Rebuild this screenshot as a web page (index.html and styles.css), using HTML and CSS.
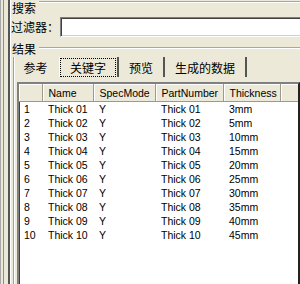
FILE: index.html
```html
<!DOCTYPE html>
<html lang="zh">
<head>
  <meta charset="UTF-8">
  <title>搜索</title>
  <link rel="stylesheet" href="styles.css">
</head>
<body>
  <div class="win">
    <div class="pane">
      <div class="grp grp-search">
        <div class="cap">搜索</div>
        <div class="filter">
          <label>过滤器：</label>
          <input type="text" />
        </div>
      </div>

      <div class="grp grp-result">
        <div class="cap">结果</div>
        <div class="tabctl">
          <div class="tabs">
            <span class="tab t1">参考</span>
            <span class="tab t2 sel"><span class="focus">关键字</span></span>
            <span class="tab t3">预览</span>
            <span class="tab t4">生成的数据</span>
          </div>
          <div class="page">
            <div class="list">
              <table>
                <colgroup>
                  <col class="c0"><col class="c1"><col class="c2"><col class="c3"><col class="c4"><col>
                </colgroup>
                <thead>
                  <tr><th></th><th>Name</th><th>SpecMode</th><th>PartNumber</th><th>Thickness</th><th></th></tr>
                </thead>
                <tbody>
                  <tr><td>1</td><td>Thick 01</td><td>Y</td><td>Thick 01</td><td>3mm</td><td></td></tr>
                  <tr><td>2</td><td>Thick 02</td><td>Y</td><td>Thick 02</td><td>5mm</td><td></td></tr>
                  <tr><td>3</td><td>Thick 03</td><td>Y</td><td>Thick 03</td><td>10mm</td><td></td></tr>
                  <tr><td>4</td><td>Thick 04</td><td>Y</td><td>Thick 04</td><td>15mm</td><td></td></tr>
                  <tr><td>5</td><td>Thick 05</td><td>Y</td><td>Thick 05</td><td>20mm</td><td></td></tr>
                  <tr><td>6</td><td>Thick 06</td><td>Y</td><td>Thick 06</td><td>25mm</td><td></td></tr>
                  <tr><td>7</td><td>Thick 07</td><td>Y</td><td>Thick 07</td><td>30mm</td><td></td></tr>
                  <tr><td>8</td><td>Thick 08</td><td>Y</td><td>Thick 08</td><td>35mm</td><td></td></tr>
                  <tr><td>9</td><td>Thick 09</td><td>Y</td><td>Thick 09</td><td>40mm</td><td></td></tr>
                  <tr><td>10</td><td>Thick 10</td><td>Y</td><td>Thick 10</td><td>45mm</td><td></td></tr>
                </tbody>
              </table>
            </div>
          </div>
        </div>
      </div>
    </div>
  </div>
</body>
</html>
```

FILE: styles.css
```css
body {
  margin: 0; background: #ece9d8; color: #000; overflow: hidden;
  font-family: "Noto Sans CJK SC", sans-serif; font-size: 12px;
}
.win {
  height: 284px; padding-left: 8px; overflow: hidden;
  box-shadow: inset 1px 0 #a8a8a8, inset 3px 0 #ece9d8, inset 4px 0 #8c8c8c;
}
.pane { height: 100%; border-left: 2px solid #555; box-shadow: inset 1px 0 #fff; }

.cap { display: flex; height: 15px; line-height: 15px; padding-left: 2px; }
.cap::after {
  content: ""; flex: 1; height: 0; margin-left: 3px;
  border-top: 1px solid #aca899; border-bottom: 1px solid #fff;
}
.grp-search .cap::after { align-self: flex-start; margin-top: 1px; }
.grp-result .cap { height: 14px; }
.grp-result .cap::after { align-self: center; }

.filter { display: flex; align-items: center; height: 20px; margin-top: 2px; }
.filter label { width: 49px; padding-left: 1px; line-height: 20px; }
.filter input {
  flex: 1; height: 20px; margin: 0 -12px 0 0; padding: 0; box-sizing: border-box;
  border: 1px solid; border-color: #808080 #fff #fff #808080;
  box-shadow: inset 1px 1px #404040, inset -1px -1px #d4d0c8; background: #fff;
}

.grp-result { margin-top: 4px; }
.tabctl {
  margin: 2px 0 0 3px; border-left: 1px solid #a0a0a0; box-shadow: inset 1px 0 #fff;
}
.tabs { display: flex; height: 21px; }
.tab {
  display: flex; align-items: center; justify-content: center; height: 20px;
  box-sizing: border-box; border-right: 2px solid #555;
}
.t1 { width: 45px; border-right-color: transparent; }
.t2 { width: 60px; }
.t3 { width: 46px; }
.t4 { width: 82px; }
.sel { box-shadow: inset 1px 0 #fff; }
.focus {
  display: flex; align-items: center; justify-content: center;
  width: 56px; height: 19px; box-sizing: border-box; border: 1px dotted #000;
}

.page { padding: 4px 0 0 3px; }
.list {
  height: 210px; background: #fff; box-sizing: border-box;
  border-top: 2px solid #808080; border-left: 2px solid #808080; border-right: 2px solid #222;
  box-shadow: inset 1px 1px #404040;
  font-family: "Liberation Sans", Arial, sans-serif; font-size: 10.5px;
}
table { border-collapse: collapse; table-layout: fixed; width: 100%; }
.c0 { width: 23px; }
.c1 { width: 51px; }
.c2 { width: 62px; }
.c3 { width: 68px; }
.c4 { width: 57px; }
th {
  height: 17px; padding: 0 0 0 6px; text-align: left; font-weight: normal;
  background: #ece9d8; border-right: 1px solid #9d9a8b; border-bottom: 1px solid #9d9a8b;
  box-shadow: inset 1px 1px #fff; white-space: nowrap; overflow: hidden;
}
th:last-child { border-right: none; }
td { height: 14px; padding: 0 0 0 6px; white-space: nowrap; line-height: 14px; }
td:first-child { padding-left: 5px; }
```
